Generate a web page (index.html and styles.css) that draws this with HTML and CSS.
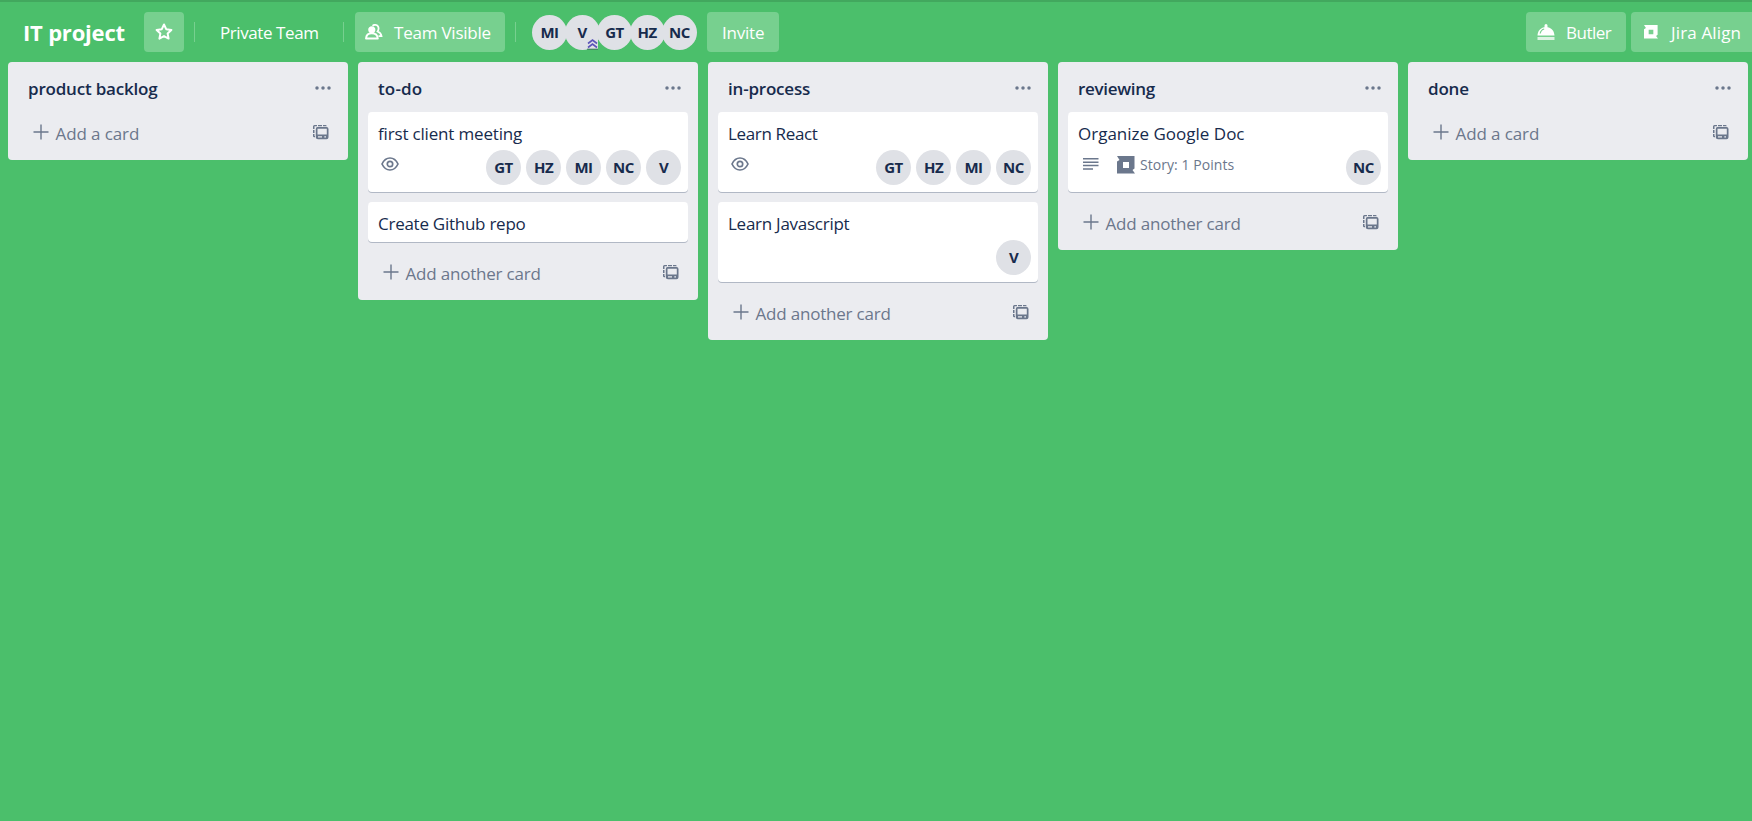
FILE: index.html
```html
<!DOCTYPE html>
<html lang="en">
<head>
<meta charset="utf-8">
<title>IT project</title>
<link rel="stylesheet" href="styles.css">
</head>
<body>
<svg class="sprite" aria-hidden="true">
  <symbol id="dots" viewBox="0 0 16 4"><circle cx="2" cy="2" r="1.75"/><circle cx="8" cy="2" r="1.75"/><circle cx="14" cy="2" r="1.75"/></symbol>
  <symbol id="plus" viewBox="0 0 16 16"><path d="M8 .5v15M.5 8h15" fill="none" stroke="currentColor" stroke-width="1.4"/></symbol>
  <symbol id="template" viewBox="0 0 16 15"><path d="M0 4V1.500Q0 0 1.500 0H4v1.300H1.500V4zM5 0h4v1.300H5zM10 0h2.500q1 0 1.300 1.300H10zM0 5h1.500v3H0zM0 9h1.500v2H2v1.300H1.300Q0 12.300 0 11z"/><path fill-rule="evenodd" d="M4.500 2h9Q15.500 2 15.500 4v8.300q0 2-2 2h-8.500q-2.200 0-2.200-2V4q0-2 1.700-2zM4.500 3.800v5.700h9.300V3.800zM5 11.300v1.200h4v-1.200zM11.300 11.300v1.200h1.700v-1.200z"/></symbol>
  <symbol id="eye" viewBox="0 0 18 14"><path d="M1 7C3 2.800 5.700 1 9 1s6 1.800 8 6c-2 4.200-4.700 6-8 6S3 11.200 1 7z" fill="none" stroke="currentColor" stroke-width="1.700"/><circle cx="9" cy="7" r="2.700" fill="none" stroke="currentColor" stroke-width="1.700"/></symbol>
  <symbol id="jira" viewBox="0 0 18 18"><path fill-rule="evenodd" d="M0 0h17.500v12.500L15.500 14l2.500 3.500H0V5.500L2.500 4zM6 6v6h6V6z"/></symbol>
</svg>

<header class="header">
  <h1 class="title"><span>IT project</span></h1>
  <button class="btn star" aria-label="Star"><svg width="18" height="18" viewBox="0 0 18 18"><path d="M9 1.500l2.200 4.700 5.200.7-3.800 3.500 1 5.200L9 13.100l-4.600 2.500 1-5.200L1.600 6.900l5.200-.7z" fill="none" stroke="currentColor" stroke-width="2" stroke-linejoin="round"/></svg></button>
  <i class="sep sep-one"></i>
  <span class="team">Private Team</span>
  <i class="sep sep-two"></i>
  <button class="btn visible"><svg width="18" height="16" viewBox="0 0 18 16"><path d="M7.600 1.800C8.500.9 9.600.8 10.500.9c2.200.3 3.300 2.100 3 4.100-.1 1.100-.5 1.800-.9 2.400 2 .8 3.500 2.200 3.900 4.800h-3" fill="none" stroke="currentColor" stroke-width="1.800"/><path d="M6.800 2.200c2 0 3.600 1.400 3.600 3.600S8.700 9.700 6.800 9.700 3.200 8 3.200 5.800s1.600-3.600 3.600-3.600z"/><path d="M1 14.500c.2-3.200 2-5.300 5.800-5.300s5.700 2.100 6 5.300z" fill="none" stroke="currentColor" stroke-width="1.900" stroke-linejoin="round"/></svg><span>Team Visible</span></button>
  <i class="sep sep-three"></i>
  <div class="members">
    <span class="avatar">MI</span>
    <span class="avatar">V<svg class="admin" width="11" height="12" viewBox="0 0 11 12"><path class="admin-bg" d="M0 0h11v11H0z"/><path d="M1 5.500L5.500 2 10 5.500M1 9.500L5.500 6 10 9.500"/><path class="admin-base" d="M0 11.200h11"/></svg></span>
    <span class="avatar">GT</span>
    <span class="avatar">HZ</span>
    <span class="avatar">NC</span>
  </div>
  <button class="btn invite"><span>Invite</span></button>
  <div class="tools">
    <button class="btn butler"><svg width="18" height="17" viewBox="0 0 18 17"><path d="M.5 11.500C.8 7 3.300 3.800 7.500 3.200V1.500a1.400 1.400 0 0 1 3 0v1.700c4.200.6 6.800 3.800 7 8.300z"/><path d="M3.200 9.500C3.700 7 5 5.500 7.200 5" fill="none" stroke="#77d08f" stroke-width="1.200"/><path d="M.5 13h17v3H.5z" opacity=".75"/></svg><span>Butler</span></button>
    <button class="btn align"><svg width="14" height="14"><use href="#jira"/></svg><span>Jira Align</span></button>
  </div>
</header>

<main class="board">
  <section class="list">
    <div class="list-head"><h2>product backlog</h2><svg class="dots"><use href="#dots"/></svg></div>
    <div class="list-foot"><svg class="plus"><use href="#plus"/></svg><span class="add-first">Add a card</span><svg class="template"><use href="#template"/></svg></div>
  </section>

  <section class="list">
    <div class="list-head"><h2 class="h-todo">to-do</h2><svg class="dots"><use href="#dots"/></svg></div>
    <article class="card tall">
      <span class="card-title t-first">first client meeting</span>
      <div class="badges"><svg class="eye"><use href="#eye"/></svg></div>
      <div class="card-members"><span class="avatar">GT</span><span class="avatar">HZ</span><span class="avatar">MI</span><span class="avatar">NC</span><span class="avatar">V</span></div>
    </article>
    <article class="card"><span class="card-title">Create Github repo</span></article>
    <div class="list-foot"><svg class="plus"><use href="#plus"/></svg><span>Add another card</span><svg class="template"><use href="#template"/></svg></div>
  </section>

  <section class="list">
    <div class="list-head"><h2>in-process</h2><svg class="dots"><use href="#dots"/></svg></div>
    <article class="card tall">
      <span class="card-title t-react">Learn React</span>
      <div class="badges"><svg class="eye"><use href="#eye"/></svg></div>
      <div class="card-members"><span class="avatar">GT</span><span class="avatar">HZ</span><span class="avatar">MI</span><span class="avatar">NC</span></div>
    </article>
    <article class="card tall">
      <span class="card-title">Learn Javascript</span>
      <div class="badges"></div>
      <div class="card-members"><span class="avatar">V</span></div>
    </article>
    <div class="list-foot"><svg class="plus"><use href="#plus"/></svg><span>Add another card</span><svg class="template"><use href="#template"/></svg></div>
  </section>

  <section class="list">
    <div class="list-head"><h2 class="h-reviewing">reviewing</h2><svg class="dots"><use href="#dots"/></svg></div>
    <article class="card tall">
      <span class="card-title t-doc">Organize Google Doc</span>
      <div class="badges"><svg class="lines" viewBox="0 0 16 12"><path d="M0 .8h15.500M0 4.200h15.500M0 7.600h15.500M0 11h10" stroke="currentColor" stroke-width="1.500"/></svg><svg class="story"><use href="#jira"/></svg><span class="points">Story: 1 Points</span></div>
      <div class="card-members"><span class="avatar">NC</span></div>
    </article>
    <div class="list-foot"><svg class="plus"><use href="#plus"/></svg><span>Add another card</span><svg class="template"><use href="#template"/></svg></div>
  </section>

  <section class="list">
    <div class="list-head"><h2>done</h2><svg class="dots"><use href="#dots"/></svg></div>
    <div class="list-foot"><svg class="plus"><use href="#plus"/></svg><span class="add-first">Add a card</span><svg class="template"><use href="#template"/></svg></div>
  </section>
</main>
</body>
</html>
```
FILE: styles.css
```css
* { box-sizing: border-box; }
body {
  margin: 0;
  height: 821px;
  overflow: hidden;
  background: #4bbf6b;
  border-top: 2px solid #42a85e;
  font-family: "Open Sans", "Noto Sans", sans-serif;
  font-size: 17px;
  color: #172b4d;
}
.sprite { position: absolute; width: 0; height: 0; }
svg { display: block; flex: none; fill: currentColor; }
span, h1, h2 { white-space: nowrap; }

.header {
  display: flex;
  align-items: center;
  height: 60px;
  padding-left: 23px;
  color: #fff;
}
.title {
  width: 121px;
  margin: 0;
  font-size: 22px;
  line-height: 40px;
  font-weight: 700;
  letter-spacing: -0.2px;
}
.btn {
  display: flex;
  align-items: center;
  flex: none;
  height: 40px;
  padding: 0;
  border: 0;
  border-radius: 4px;
  background: #77d08f;
  color: #fff;
  font: 400 17px/38px "Open Sans", "Noto Sans", sans-serif;
  letter-spacing: -0.22px;
}
.btn > span { padding-top: 2px; }
.star { width: 40px; justify-content: center; }
.sep { width: 1px; height: 20px; margin-bottom: 1px; background: #77d08f; flex: none; }
.sep-one { margin-left: 10px; }
.team { width: 98px; margin-left: 25px; padding-top: 2px; line-height: 38px; letter-spacing: -0.42px; }
.sep-two { margin-left: 25px; }
.visible { width: 150px; margin-left: 11px; padding-left: 10px; gap: 11px; }
.sep-three { margin-left: 10px; }
.members { display: flex; margin-left: 16px; }
.members .avatar { margin-right: -2.5px; }
.avatar {
  position: relative;
  display: block;
  flex: none;
  width: 35px;
  height: 35px;
  border-radius: 50%;
  background: #dfe1e6;
  color: #172b4d;
  font-size: 15px;
  line-height: 35px;
  font-weight: 700;
  text-align: center;
  letter-spacing: -0.5px;
}
.admin { position: absolute; right: 1.5px; bottom: 0; fill: none; stroke: #5b54b8; stroke-width: 1.6; }
.admin-bg { fill: #dfe1e6; stroke: none; }
.admin-base { stroke: #41795c; stroke-width: 1; }
.invite { width: 72px; margin-left: 12.5px; padding-left: 15px; }
.tools { display: flex; gap: 5px; margin-left: auto; }
.butler { width: 100px; padding-left: 11px; gap: 11px; letter-spacing: -0.5px; }
.align { width: 121px; padding-left: 13px; gap: 13px; border-radius: 4px 0 0 4px; letter-spacing: 0.15px; }

.board { display: flex; align-items: flex-start; gap: 10px; padding-left: 8px; }
.list {
  flex: none;
  width: 340px;
  padding: 0 10px;
  border-radius: 4px;
  background: #ebecf0;
}
.list-head { display: flex; align-items: center; height: 50px; padding: 4px 7px 0 10px; }
h2 { margin: 0; font-size: 17px; line-height: 24px; font-weight: 600; letter-spacing: -0.2px; }
.h-todo { letter-spacing: 0.15px; }
.h-reviewing { letter-spacing: -0.3px; }
.dots { width: 16px; height: 4px; margin: -3px 0 0 auto; color: #6b778c; }
.card {
  height: 40px;
  margin-bottom: 10px;
  padding: 10px 7px 0 10px;
  border-radius: 4px;
  background: #fff;
  box-shadow: 0 1px 0 #b1b8c5;
}
.card-title { display: block; font-size: 17px; line-height: 24px; letter-spacing: -0.26px; }
.t-first { letter-spacing: -0.17px; }
.t-react { letter-spacing: -0.35px; }
.t-doc { letter-spacing: 0; }
.tall {
  display: grid;
  grid-template: 28px 35px / 1fr auto;
  height: 80px;
}
.tall .card-title { grid-column: 1 / 3; }
.badges { display: flex; align-items: center; height: 28px; padding-left: 3px; color: #6b778c; }
.eye { width: 18px; height: 14px; }
.lines { width: 16px; height: 12px; margin-left: 1.5px; }
.story { width: 18px; height: 18px; margin: 2px 0 0 18px; }
.points { margin-left: 5.5px; padding-top: 1px; font-size: 14px; letter-spacing: 0.05px; }
.card-members { display: flex; gap: 5px; }
.list-foot { display: flex; align-items: center; height: 48px; padding: 0 9px 5px 14.5px; color: #6b778c; letter-spacing: -0.2px; font-size: 17px; }
.add-first { letter-spacing: -0.1px; }
.plus { width: 16px; height: 16px; margin: -3px 7px 0 0; }
.template { width: 16px; height: 15px; margin: -3px 0 0 auto; }
```
